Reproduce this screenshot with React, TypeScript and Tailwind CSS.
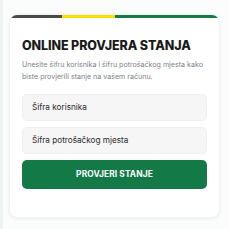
export default function App() {
  return (
    <div
      className="w-[229px] h-[229px] bg-[#fbfcfc] border-l-[3px] border-[#eef3f3] pl-[6px] pr-[9px] pt-[14px]"
      style={{ fontFamily: "Inter, 'Noto Sans', sans-serif" }}
    >
      <div className="bg-white rounded-[8px] shadow-[0_1px_4px_rgba(0,0,0,0.06)] border border-[#f1f3f3] overflow-hidden h-[204px]">
        {/* Colour stripe */}
        <div className="flex h-[3px]">
          <div className="w-[52px] bg-[#4a4a4a]" />
          <div className="w-[53px] bg-[#f7e000]" />
          <div className="flex-1 bg-[#157a45]" />
        </div>

        <div className="px-[12px] pt-[20px]">
          <h2 className="text-[12.5px] font-extrabold text-[#1a1a1a] leading-[16px] tracking-[-0.1px]">
            ONLINE PROVJERA STANJA
          </h2>
          <p className="mt-[5px] text-[7.1px] leading-[12px] text-[#7a7f85]">
            Unesite šifru korisnika i šifru potrošačkog mjesta kako biste provjerili stanje na vašem računu.
          </p>

          <div className="mt-[11px] flex flex-col gap-[6px]">
            <div className="h-[27px] rounded-[5px] bg-[#f6f6f6] border border-[#efefef] flex items-center px-[9px]">
              <span className="text-[8.2px] text-[#2a2a2a]">Šifra korisnika</span>
            </div>
            <div className="h-[27px] rounded-[5px] bg-[#f6f6f6] border border-[#efefef] flex items-center px-[9px]">
              <span className="text-[8.2px] text-[#2a2a2a]">Šifra potrošačkog mjesta</span>
            </div>
            <button className="h-[29px] rounded-[5px] bg-[#137a47] text-white text-[8.4px] font-bold tracking-[0.1px]">
              PROVJERI STANJE
            </button>
          </div>
        </div>
      </div>
    </div>
  );
}
